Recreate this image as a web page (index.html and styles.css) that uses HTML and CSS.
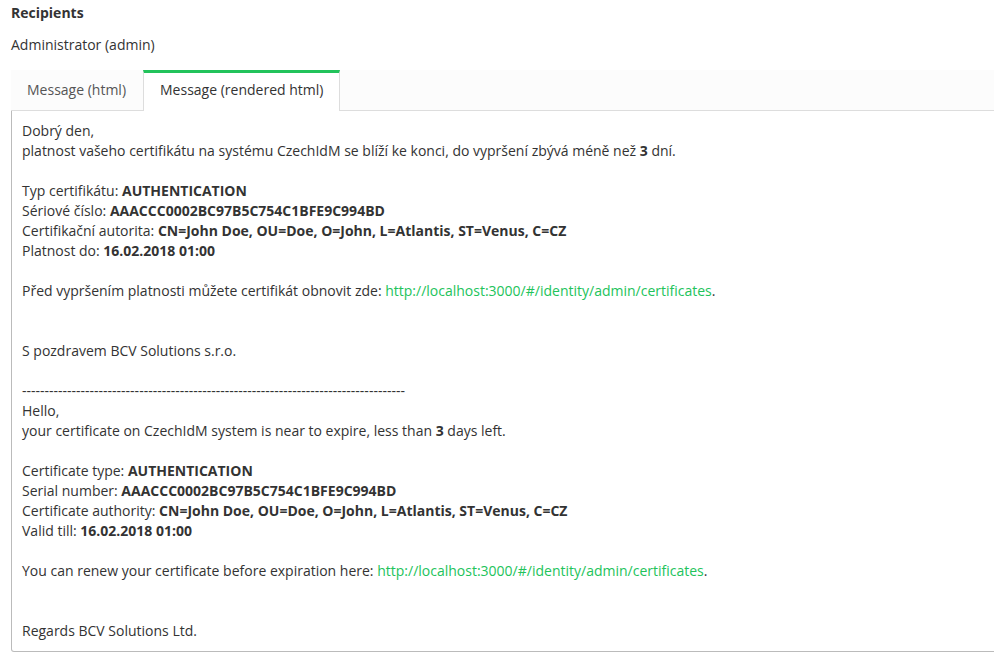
FILE: index.html
```html
<!DOCTYPE html>
<html>
<head>
<meta charset="utf-8">
<link rel="stylesheet" href="styles.css">
</head>
<body>
<div class="page">
  <div class="label">Recipients</div>
  <div class="recipient">Administrator (admin)</div>
  <div class="tabs">
    <div class="tab">Message (html)</div>
    <div class="tab active">Message (rendered html)</div>
  </div>
  <div class="panel">
    Dobrý den,<br>
    platnost vašeho certifikátu na systému CzechIdM se blíží ke konci, do vypršení zbývá méně než <b>3</b> dní.<br>
    <br>
    Typ certifikátu: <b>AUTHENTICATION</b><br>
    Sériové číslo: <b>AAACCC0002BC97B5C754C1BFE9C994BD</b><br>
    Certifikační autorita: <b>CN=John Doe, OU=Doe, O=John, L=Atlantis, ST=Venus, C=CZ</b><br>
    Platnost do: <b>16.02.2018 01:00</b><br>
    <br>
    Před vypršením platnosti můžete certifikát obnovit zde: <a href="#">http://localhost:3000/#/identity/admin/certificates</a>.<br>
    <br>
    <br>
    S pozdravem BCV Solutions s.r.o.<br>
    <br>
    -------------------------------------------------------------------------------------<br>
    Hello,<br>
    your certificate on CzechIdM system is near to expire, less than <b>3</b> days left.<br>
    <br>
    Certificate type: <b>AUTHENTICATION</b><br>
    Serial number: <b>AAACCC0002BC97B5C754C1BFE9C994BD</b><br>
    Certificate authority: <b>CN=John Doe, OU=Doe, O=John, L=Atlantis, ST=Venus, C=CZ</b><br>
    Valid till: <b>16.02.2018 01:00</b><br>
    <br>
    You can renew your certificate before expiration here: <a href="#">http://localhost:3000/#/identity/admin/certificates</a>.<br>
    <br>
    <br>
    Regards BCV Solutions Ltd.
  </div>
</div>
</body>
</html>
```
FILE: styles.css
```css
html, body {
  margin: 0;
  padding: 0;
  background: #fff;
  overflow: hidden;
}
body {
  font-family: "Open Sans", "Noto Sans", sans-serif;
  font-size: 14px;
  line-height: 20px;
  color: #333;
}
.page {
  padding: 3px 0 0 11px;
  margin-right: -20px;
}
.label {
  font-weight: bold;
  height: 20px;
}
.recipient {
  margin-top: 12px;
  height: 20px;
}
.tabs {
  margin-top: 15px;
  display: flex;
  background: #fcfcfc;
  border-bottom: 1px solid #dddddd;
  height: 40px;
}
.tab {
  padding: 7px 17px 0 16px;
  color: #555;
  box-sizing: border-box;
  height: 41px;
  border-top: 3px solid transparent;
}
.tab.active {
  background: #fff;
  color: #333;
  border-top: 3px solid #22c35b;
  border-left: 1px solid #dddddd;
  border-right: 1px solid #dddddd;
  padding-left: 16px;
  padding-right: 16px;
}
.panel {
  border: 1px solid #bbbbbb;
  border-top: none;
  border-radius: 0 0 3px 3px;
  padding: 10px 10px 10px 10px;
}
.panel a {
  color: #22c35b;
  text-decoration: none;
}
```
